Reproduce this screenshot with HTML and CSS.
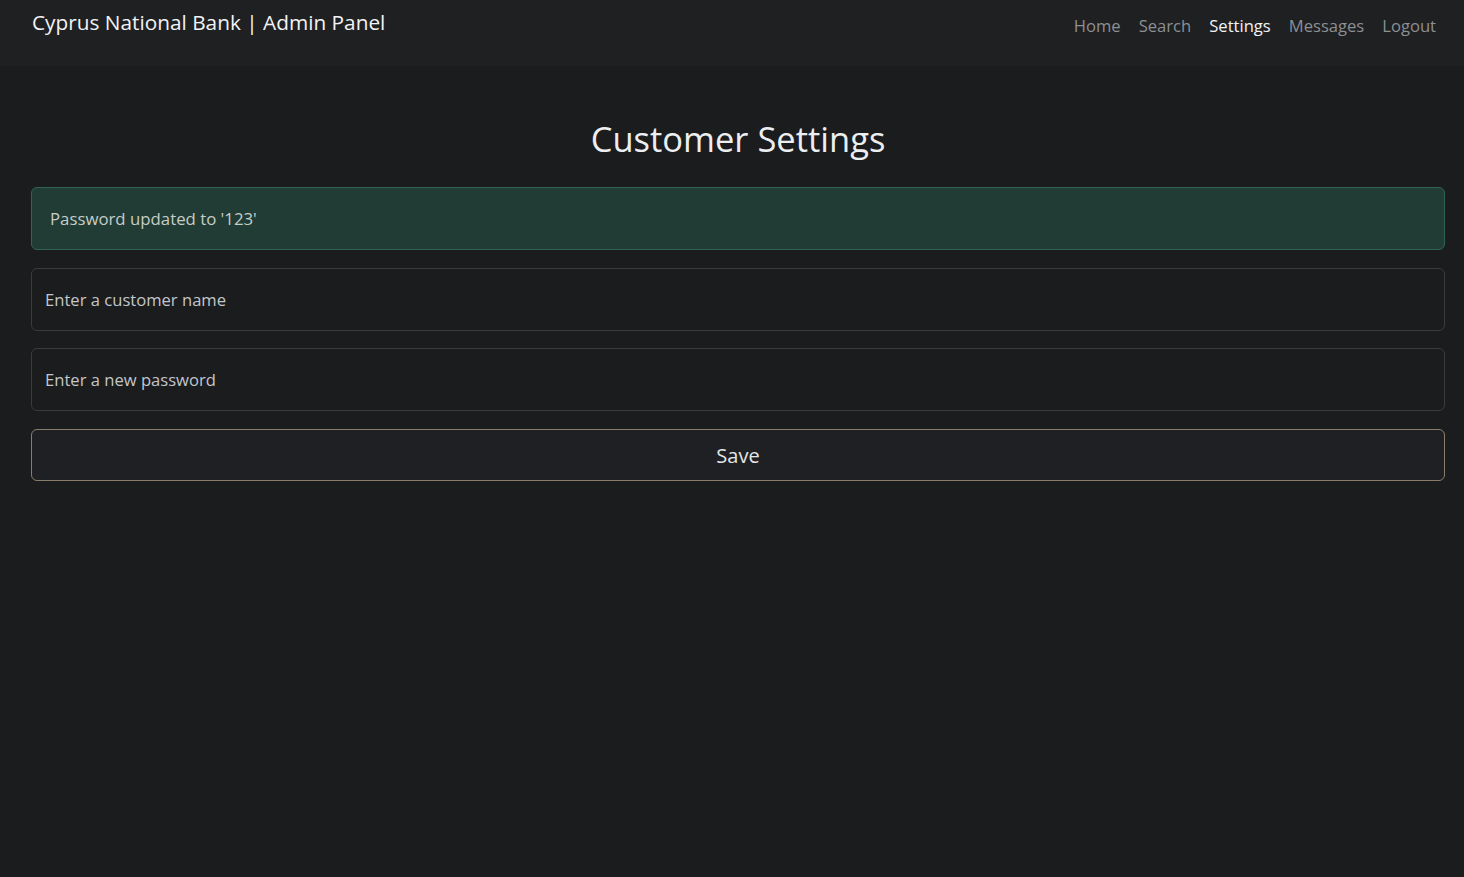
FILE: index.html
```html
<!DOCTYPE html>
<html lang="en">
<head>
<meta charset="utf-8">
<title>Cyprus National Bank | Admin Panel</title>
<link rel="stylesheet" href="styles.css">
</head>
<body>
<nav class="navbar">
  <a class="brand" href="#">Cyprus National Bank | Admin Panel</a>
  <ul class="nav">
    <li><a href="#">Home</a></li>
    <li><a href="#">Search</a></li>
    <li><a class="active" href="#">Settings</a></li>
    <li><a href="#">Messages</a></li>
    <li><a href="#">Logout</a></li>
  </ul>
</nav>
<main class="container">
  <h2 class="title">Customer Settings</h2>
  <div class="alert">Password updated to '123'</div>
  <form class="form">
    <input class="field" type="text" placeholder="Enter a customer name">
    <input class="field" type="password" placeholder="Enter a new password">
    <button class="save" type="button">Save</button>
  </form>
</main>
</body>
</html>
```
FILE: styles.css
```css
html, body {
  margin: 0;
  padding: 0;
  background: #1b1c1e;
  font-family: "Open Sans", "Noto Sans", sans-serif;
  color: #dee2e6;
  height: 100%;
}
.navbar {
  display: flex;
  justify-content: space-between;
  align-items: flex-start;
  height: 66px;
  box-sizing: border-box;
  padding: 8px 28px 0 32px;
  background: #1f2022;
}
.brand {
  color: #f1f3f5;
  text-decoration: none;
  font-size: 20.8px;
  line-height: 28px;
}
.nav {
  display: flex;
  list-style: none;
  margin: 0;
  padding: 0;
  gap: 18px;
  margin-top: 5px;
}
.nav a {
  color: #8c8f93;
  text-decoration: none;
  font-size: 16.6px;
  line-height: 26px;
}
.nav a.active { color: #f1f3f5; }
.container {
  padding: 0 19px 0 31px;
}
.title {
  margin: 52px 0 27px;
  text-align: center;
  font-weight: 400;
  font-size: 34.5px;
  line-height: 42px;
  color: #eceef0;
}
.alert {
  box-sizing: border-box;
  height: 63px;
  display: flex;
  align-items: center;
  padding: 0 18px;
  background: #213c34;
  border: 1px solid #2f6550;
  border-radius: 6px;
  color: #c6cdc8;
  font-size: 16.8px;
  margin-bottom: 18px;
}
.form {
  display: flex;
  flex-direction: column;
  gap: 17px;
}
.field {
  box-sizing: border-box;
  height: 63px;
  padding: 0 13px;
  background: #1b1c1e;
  border: 1px solid #3a3b3e;
  border-radius: 6px;
  font-family: inherit;
  font-size: 16.6px;
  color: #dee2e6;
  outline: none;
}
.field::placeholder { color: #c3c6ca; }
.save {
  box-sizing: border-box;
  height: 52px;
  margin-top: 1px;
  background: #1f2023;
  border: 1px solid #8b7d6c;
  border-radius: 6px;
  font-family: inherit;
  font-size: 20px;
  color: #e4e6e9;
  cursor: pointer;
}
```
